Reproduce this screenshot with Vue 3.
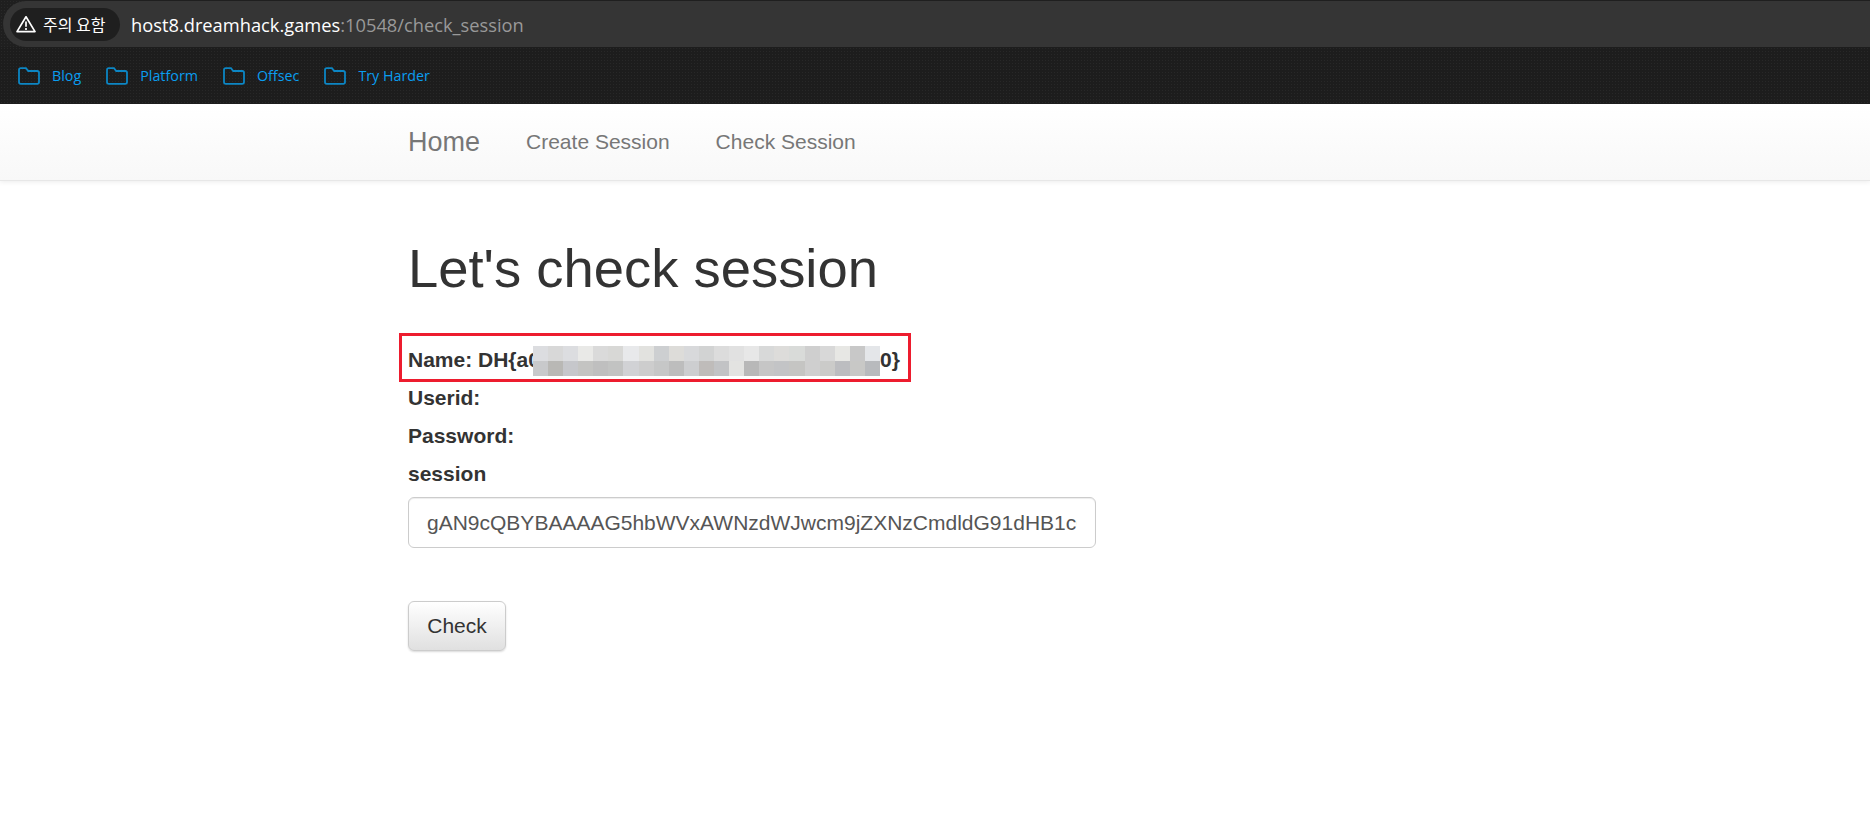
<template>
  <div class="page">
    <div class="toolbar">
      <div class="omnibox">
        <div class="chip">
          <svg class="warn" width="20" height="18" viewBox="0 0 20 18">
            <path d="M10 1.8 L19 16.6 H1 Z" fill="none" stroke="#fff" stroke-width="1.7" stroke-linejoin="round" />
            <path d="M10 6.6 V11.8 M10 13 V15" stroke="#fff" stroke-width="1.7" fill="none" />
          </svg>
          <span>주의 요함</span>
        </div>
        <div class="url"><b>host8.dreamhack.games</b>:10548/check_session</div>
      </div>
    </div>
    <div class="bookmarks">
      <div v-for="b in bookmarks" :key="b" class="bookmark">
        <svg width="22" height="18" viewBox="0 0 22 18">
          <path d="M1 3 Q1 1.2 2.8 1.2 H8 L10.2 4 H19.2 Q21 4 21 5.8 V15 Q21 16.8 19.2 16.8 H2.8 Q1 16.8 1 15 Z" fill="none" stroke="#0c86c4" stroke-width="1.8" />
        </svg>
        <span>{{ b }}</span>
      </div>
    </div>

    <nav class="navbar">
      <a class="brand">Home</a>
      <a class="nav-link">Create Session</a>
      <a class="nav-link">Check Session</a>
    </nav>

    <main class="container">
      <h1>Let's check session</h1>
      <div class="name-row">
        <label class="line">Name: DH{a0<span class="blur"><i v-for="(c, i) in pixels" :key="i" :style="{ background: c }"></i></span>0}</label>
        <div class="highlight"></div>
      </div>
      <label class="line">Userid:</label>
      <label class="line">Password:</label>
      <label class="line">session</label>
      <input class="field" value="gAN9cQBYBAAAAG5hbWVxAWNzdWJwcm9jZXNzCmdldG91dHB1cQ" readonly />
      <button class="btn">Check</button>
    </main>
  </div>
</template>

<script setup>
const bookmarks = ['Blog', 'Platform', 'Offsec', 'Try Harder']

// mosaic over the flag, two rows of 23 cells
const top = ['#dcdde0','#d8d8d8','#dcdde0','#e9e9e7','#dadada','#d8d8d6','#e8e9eb','#e2e2df','#cdcfd1','#dddcd9','#d8d9db','#d2d3d3','#dcdcdc','#e1e1e1','#e7e7e7','#d8d9d9','#dddcda','#d9dbd9','#cfcfcf','#d8d8d8','#e7e7e4','#c8c8c8','#e4e6e9']
const bottom = ['#c8c9cb','#b9b8b5','#c6c7cb','#c4c4c2','#bfbfbf','#c2c3c2','#d1d2d5','#cdcdcd','#c6c7c7','#bdbdbd','#cdced0','#bfbcba','#c2c3c5','#e3e3e1','#b8b8b8','#c6c6c6','#c3c4c6','#c5c5c3','#cfcfcf','#cbcbc9','#bcbdc0','#c8c8c6','#b8babd']
const pixels = [...top, ...bottom]
</script>

<style>
html, body {
  margin: 0;
  background: #fff;
}
</style>

<style scoped>
.page {
  font-family: "Liberation Sans", Arial, sans-serif;
  min-height: 819px;
  background: #fff;
  color: #333;
}

.toolbar {
  height: 47px;
  box-sizing: border-box;
  padding-top: 1px;
  background-color: #1f1f1f;
  background-image: radial-gradient(#292929 0.7px, transparent 0.8px);
  background-size: 3px 3px;
}

.omnibox {
  height: 46px;
  margin-left: 3px;
  border-radius: 23px 0 0 23px;
  background: #353535;
  display: flex;
  align-items: center;
  padding-left: 7px;
}

.chip {
  height: 33px;
  width: 110px;
  border-radius: 17px;
  background: #1f1f1f;
  color: #fff;
  display: flex;
  align-items: center;
  gap: 7px;
  padding-left: 6px;
  box-sizing: border-box;
  font-family: "Noto Sans CJK KR", sans-serif;
  font-size: 16px;
}

.url {
  margin-left: 11px;
  font-family: "Open Sans", sans-serif;
  font-size: 18.3px;
  color: #999;
}

.url b {
  font-weight: 400;
  color: #fff;
}

.bookmarks {
  height: 57px;
  background-color: #1d1d1d;
  background-image: radial-gradient(#282828 0.7px, transparent 0.8px);
  background-size: 3px 3px;
  display: flex;
  align-items: center;
  padding-left: 18px;
  color: #0a9df0;
  font-family: "Open Sans", sans-serif;
  font-size: 14.3px;
}

.bookmark {
  display: flex;
  align-items: center;
  gap: 12px;
  margin-right: 25px;
}

.navbar {
  height: 77px;
  box-sizing: border-box;
  padding-left: 408px;
  display: flex;
  align-items: center;
  gap: 46px;
  background: linear-gradient(to bottom, #fff, #f8f8f8);
  border-bottom: 1px solid #e7e7e7;
  box-shadow: 0 1px 5px rgba(0, 0, 0, 0.08);
}

.brand {
  font-size: 27px;
  color: #777;
}

.nav-link {
  font-size: 21px;
  color: #777;
}

.container {
  width: 688px;
  margin-left: 408px;
}

h1 {
  margin: 0;
  padding-top: 58px;
  height: 102px;
  font-size: 54.4px;
  line-height: 60px;
  font-weight: 500;
  color: #333;
}

.name-row {
  position: relative;
}

/* annotation box drawn on top of the screenshot */
.highlight {
  position: absolute;
  top: -8px;
  left: -9px;
  width: 512px;
  height: 49px;
  box-sizing: border-box;
  border: 3px solid #ed1c2e;
}

.line {
  display: block;
  font-size: 21px;
  font-weight: 700;
  line-height: 38px;
}

.blur {
  display: inline-grid;
  grid-template-columns: repeat(23, 15.1px);
  grid-template-rows: 15px 15px;
  vertical-align: middle;
  margin-left: -7px;
  position: relative;
}

.field {
  display: block;
  width: 688px;
  height: 51px;
  box-sizing: border-box;
  margin-top: 4px;
  padding: 0 18px;
  border: 1px solid #ccc;
  border-radius: 6px;
  font-family: "Liberation Sans", Arial, sans-serif;
  font-size: 21px;
  color: #555;
  box-shadow: inset 0 1px 1px rgba(0, 0, 0, 0.075);
  outline: none;
}

.btn {
  display: block;
  margin-top: 53px;
  width: 98px;
  height: 50px;
  border: 1px solid #ccc;
  border-radius: 6px;
  background: linear-gradient(to bottom, #fff, #e0e0e0);
  box-shadow: 0 1px 2px rgba(0, 0, 0, 0.15);
  font-family: "Liberation Sans", Arial, sans-serif;
  font-size: 21px;
  color: #333;
}
</style>
